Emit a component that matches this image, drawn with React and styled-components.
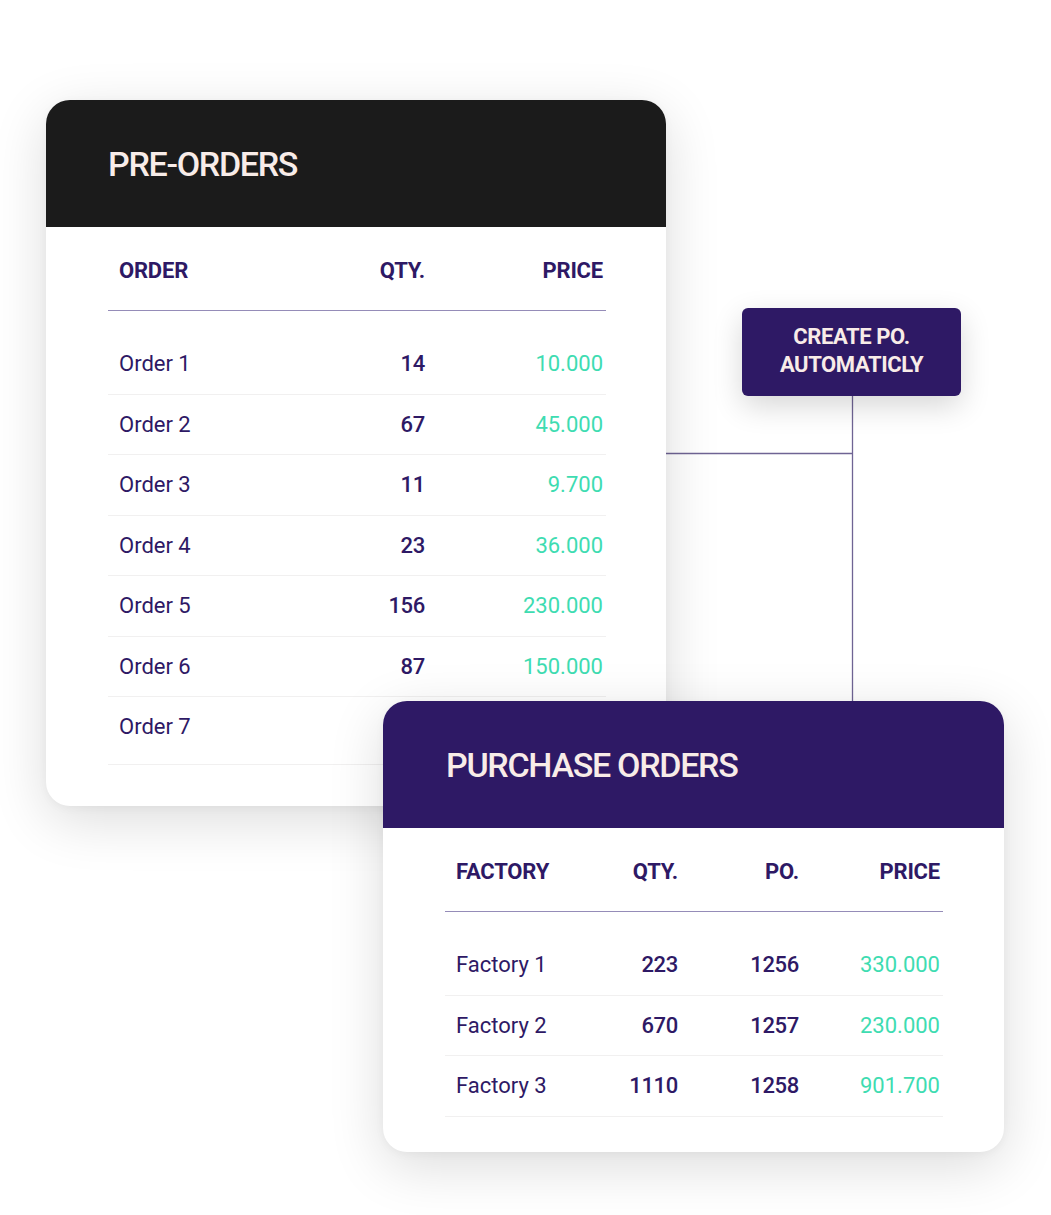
import React from "react";
import styled, { createGlobalStyle } from "styled-components";

const Global = createGlobalStyle`
  html, body { margin: 0; padding: 0; background: #ffffff; }
  body { font-family: Roboto, "Liberation Sans", Arial, sans-serif; }
`;

const PURPLE = "#2e1965";
const CREAM = "#f8ece8";
const GREEN = "#3edcb1";

const Canvas = styled.div`
  position: relative;
  width: 1051px;
  height: 1215px;
  overflow: hidden;
  background: #ffffff;
`;

const Connectors = styled.svg`
  position: absolute;
  left: 0;
  top: 0;
  width: 1051px;
  height: 1215px;
`;

const Card = styled.section`
  position: absolute;
  left: ${(p) => p.$x}px;
  top: ${(p) => p.$y}px;
  width: ${(p) => p.$w}px;
  background: #ffffff;
  border-radius: 24px;
  overflow: hidden;
  box-shadow: 0 14px 55px rgba(0, 0, 0, 0.14), 0 2px 10px rgba(0, 0, 0, 0.04);
`;

const CardHeader = styled.header`
  height: 127px;
  display: flex;
  align-items: center;
  padding-left: ${(p) => p.$pad}px;
  background: ${(p) => p.$bg};
`;

const Title = styled.h2`
  margin: 0;
  font-size: 34px;
  font-weight: 500;
  letter-spacing: -1.3px;
  color: ${CREAM};
`;

const Body = styled.div`
  padding: 0 ${(p) => p.$right}px ${(p) => p.$bottom}px 62px;
`;

const HeadRow = styled.div`
  box-sizing: border-box;
  height: 84px;
  display: grid;
  grid-template-columns: ${(p) => p.$cols};
  align-items: center;
  padding: 4px 3px 0 11px;
  border-bottom: 1.5px solid #958cb8;
`;

const HeadCell = styled.div`
  font-size: 22px;
  font-weight: 700;
  letter-spacing: -0.2px;
  color: ${PURPLE};
  text-align: ${(p) => (p.$left ? "left" : "right")};
`;

const List = styled.div`
  padding-top: 23px;
`;

const Row = styled.div`
  box-sizing: border-box;
  height: ${(p) => (p.$tall ? 68 : 60.5)}px;
  padding: 0 3px ${(p) => (p.$tall ? 8 : 0)}px 11px;
  display: grid;
  grid-template-columns: ${(p) => p.$cols};
  align-items: center;
  border-bottom: 1.5px solid #f1f0f0;
`;

const Name = styled.div`
  font-size: 22px;
  font-weight: 400;
  color: ${PURPLE};
`;

const Num = styled.div`
  font-size: 22px;
  font-weight: 500;
  letter-spacing: -0.3px;
  color: ${PURPLE};
  text-align: right;
`;

const Price = styled.div`
  font-size: 22px;
  font-weight: 400;
  color: ${GREEN};
  text-align: right;
`;

const Label = styled.div`
  position: absolute;
  left: 742px;
  top: 308px;
  width: 219px;
  height: 88px;
  box-sizing: border-box;
  padding-bottom: 2px;
  display: flex;
  flex-direction: column;
  align-items: center;
  justify-content: center;
  background: ${PURPLE};
  border-radius: 6px;
  box-shadow: 0 10px 30px rgba(0, 0, 0, 0.16);
  color: ${CREAM};
  font-size: 22px;
  font-weight: 700;
  line-height: 28px;
  letter-spacing: -0.4px;
  text-align: center;
`;

const preCols = "1fr 100px 178px";
const poCols = "1fr 100px 121px 141px";

const preOrders = [
  ["Order 1", "14", "10.000"],
  ["Order 2", "67", "45.000"],
  ["Order 3", "11", "9.700"],
  ["Order 4", "23", "36.000"],
  ["Order 5", "156", "230.000"],
  ["Order 6", "87", "150.000"],
  ["Order 7", "", ""],
];

const purchase = [
  ["Factory 1", "223", "1256", "330.000"],
  ["Factory 2", "670", "1257", "230.000"],
  ["Factory 3", "1110", "1258", "901.700"],
];

export default function App() {
  return (
    <>
      <Global />
      <Canvas>
        <Connectors viewBox="0 0 1051 1215">
          <path d="M666 453.5 H852.5 M852.5 396 V701" stroke="#6f6494" strokeWidth="1.3" fill="none" />
        </Connectors>

        <Card $x={46} $y={100} $w={620}>
          <CardHeader $bg="#1b1b1b" $pad={62}>
            <Title>PRE-ORDERS</Title>
          </CardHeader>
          <Body $right={60} $bottom={41}>
            <HeadRow $cols={preCols}>
              <HeadCell $left>ORDER</HeadCell>
              <HeadCell>QTY.</HeadCell>
              <HeadCell>PRICE</HeadCell>
            </HeadRow>
            <List>
              {preOrders.map(([name, qty, price], i) => (
                <Row key={name} $cols={preCols} $tall={i === preOrders.length - 1}>
                  <Name>{name}</Name>
                  <Num>{qty}</Num>
                  <Price>{price}</Price>
                </Row>
              ))}
            </List>
          </Body>
        </Card>

        <Label>
          <span>CREATE PO.</span>
          <span>AUTOMATICLY</span>
        </Label>

        <Card $x={383} $y={701} $w={621}>
          <CardHeader $bg={PURPLE} $pad={63}>
            <Title>PURCHASE ORDERS</Title>
          </CardHeader>
          <Body $right={61} $bottom={35.5}>
            <HeadRow $cols={poCols}>
              <HeadCell $left>FACTORY</HeadCell>
              <HeadCell>QTY.</HeadCell>
              <HeadCell>PO.</HeadCell>
              <HeadCell>PRICE</HeadCell>
            </HeadRow>
            <List>
              {purchase.map(([name, qty, po, price]) => (
                <Row key={name} $cols={poCols}>
                  <Name>{name}</Name>
                  <Num>{qty}</Num>
                  <Num>{po}</Num>
                  <Price>{price}</Price>
                </Row>
              ))}
            </List>
          </Body>
        </Card>
      </Canvas>
    </>
  );
}
